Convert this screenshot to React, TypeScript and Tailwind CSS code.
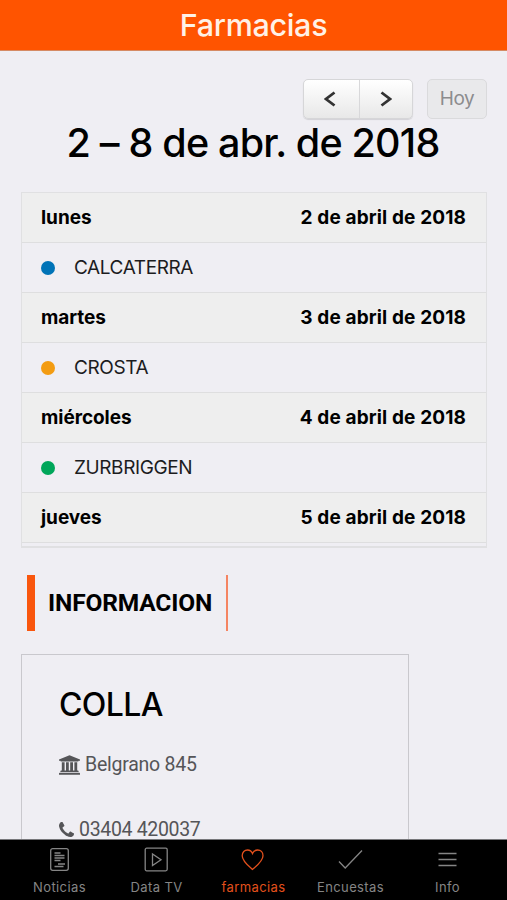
import React from 'react';

interface DayEntry {
    day: string;
    date: string;
    name?: string;
    dot?: string;
}

const days: DayEntry[] = [
    { day: 'lunes', date: '2 de abril de 2018', name: 'CALCATERRA', dot: 'bg-[#0073b7]' },
    { day: 'martes', date: '3 de abril de 2018', name: 'CROSTA', dot: 'bg-[#f39c12]' },
    { day: 'miércoles', date: '4 de abril de 2018', name: 'ZURBRIGGEN', dot: 'bg-[#00a65a]' },
    { day: 'jueves', date: '5 de abril de 2018' },
];

const BankIcon = () => (
    <svg viewBox="0 0 1920 1792" className="h-5 w-[21px] shrink-0" fill="currentColor">
        <path d="M960 0l960 384v128h-128q0 26-20.500 45t-48.500 19h-1526q-28 0-48.500-19t-20.500-45h-128v-128zM256 640h256v768h128v-768h256v768h128v-768h256v768h128v-768h256v768h59q28 0 48.500 19t20.500 45v64h-1664v-64q0-26 20.500-45t48.500-19h59v-768zM1851 1600q28 0 48.500 19t20.500 45v128h-1920v-128q0-26 20.500-45t48.500-19h1782z" />
    </svg>
);

const PhoneIcon = () => (
    <svg viewBox="192 128 1408 1408" className="mb-[2px] size-[15px] shrink-0" fill="currentColor">
        <path d="M1600 1240q0 27-10 70.500t-21 68.500q-21 50-122 106-94 51-186 51-27 0-52.500-3.500t-57.500-12.500-47.500-14.500-55.500-20.500-49-18q-98-35-175-83-128-79-264.500-215.500t-215.500-264.500q-48-77-83-175-3-9-18-49t-20.500-55.500-14.500-47.500-12.500-57.500-3.500-52.500q0-92 51-186 56-101 106-122 25-11 68.500-21t70.500-10q14 0 21 3 18 6 53 76 11 19 30 54t35 63.500 31 53.500q3 4 17.500 25t21.500 35.500 7 28.500q0 20-28.500 50t-62 55-62 53-28.500 46q0 9 5 22.500t8.500 20.500 14 24 11.500 19q76 137 174 235t235 174q2 1 19 11.500t24 14 20.500 8.500 22.500 5q18 0 46-28.500t53-62 55-62 50-28.500q14 0 28.500 7t35.500 21.500 25 17.500q25 15 53.500 31t63.500 35 54 30q70 35 76 53 3 7 3 21z" />
    </svg>
);

const tabs = [
    {
        label: 'Noticias',
        icon: (
            <>
                <rect x="4.700" y="2.700" width="17.600" height="21.600" rx="2" />
                <path d="M8.500 7h6M8.500 9.500h10M8.500 12h10M8.500 14.500h6M12 18h7M8.500 20.500h9" />
            </>
        ),
    },
    {
        label: 'Data TV',
        icon: (
            <>
                <rect x="2.200" y="2.200" width="22" height="22.600" rx="1.500" />
                <path d="M9.500 8v11.500l8.500-5.700z" />
            </>
        ),
    },
    {
        label: 'farmacias',
        active: true,
        icon: (
            <path d="M12.500 23.500C8 19.500 2.200 15 2.200 9.700C2.200 6.300 4.600 4 7.500 4C9.900 4 11.700 5.500 12.500 7.500C13.300 5.500 15.300 4 17.700 4C20.600 4 23 6.300 23 9.700C23 15 17 19.500 12.500 23.500Z" />
        ),
    },
    { label: 'Encuestas', icon: <path d="M2 15.500l6.200 6.500L25 4.500" /> },
    { label: 'Info', icon: <path d="M4.500 7.500h18M4.500 13.500h18M4.500 19.500h18" /> },
];

const Calendar: React.FC = () => (
    <section className="mr-5 ml-[21px] pt-7">
        {/* Toolbar */}
        <div className="flex h-10 justify-end gap-[14px]">
            <div className="flex w-[110px] overflow-hidden rounded-[5px] border border-[#d6d6d8] bg-linear-to-b from-white to-[#e8e8e8] shadow-[0_1px_1px_rgba(0,0,0,0.12)]">
                <button className="flex flex-1 items-center justify-center border-r border-[#d8d8da] pr-[2px]">
                    <svg viewBox="0 0 12 16" className="h-4 w-3" fill="none" stroke="#333" strokeWidth="2.800">
                        <path d="M10.500 1.500L2 8l8.500 6.500" />
                    </svg>
                </button>
                <button className="flex flex-1 items-center justify-center">
                    <svg viewBox="0 0 12 16" className="h-4 w-3" fill="none" stroke="#333" strokeWidth="2.800">
                        <path d="M1.500 1.500L10 8l-8.500 6.500" />
                    </svg>
                </button>
            </div>
            <button className="w-[60px] rounded-[5px] border border-[#dadadc] bg-[#e9e9eb] text-[19px] tracking-[-0.4px] text-[#8c8c8e]">
                Hoy
            </button>
        </div>
        <h2 className="-mt-[2px] pr-[2px] text-center text-[39.500px] leading-[52px] font-medium tracking-[-0.8px] whitespace-nowrap">
            2 – 8 de abr. de 2018
        </h2>

        {/* Week list */}
        <div className="mt-[23px] h-[356px] overflow-hidden border border-b-2 border-[#e0e0e2]">
            {days.map((d) => (
                <React.Fragment key={d.day}>
                    <div className="flex h-[50px] items-center justify-between border-b border-[#dededf] bg-[#eeeeee] px-[19px] pt-px text-[19px] font-bold">
                        <span className="tracking-[-0.05px]">{d.day}</span>
                        <span className="mr-px tracking-[0.13px]">{d.date}</span>
                    </div>
                    {d.name && (
                        <div className="flex h-[50px] items-center border-b border-[#dededf] pl-[19px] text-[19px] text-[#1c1c1e]">
                            <span className={`size-[14px] rounded-full ${d.dot}`} />
                            <span className="ml-[19px] pt-[2px] tracking-[-0.4px]">{d.name}</span>
                        </div>
                    )}
                </React.Fragment>
            ))}
        </div>
    </section>
);

export default function App() {
    return (
        <div className="flex h-[900px] w-[507px] flex-col overflow-hidden bg-[#efeef3] font-['Inter',sans-serif] text-black">
            <header className="flex h-[51px] shrink-0 items-center justify-center border-b border-[#d58a64] bg-[#ff5400] text-[30.500px] font-medium tracking-[-0.3px] text-[#fff1e6]">
                Farmacias
            </header>

            <main className="min-h-0 flex-1 overflow-hidden">
                <Calendar />

                <div className="mt-[27px] ml-[27px] flex h-14 w-[201px] items-center border-r-2 border-l-8 border-r-[#f58462] border-l-[#f9560d] pt-px pl-[13px] font-['Roboto',sans-serif] text-[24.500px] font-bold tracking-[-0.15px]">
                    INFORMACION
                </div>

                {/* Pharmacy details */}
                <div className="mt-[23px] ml-[21px] h-[240px] w-[388px] border border-[#c9c8cd] px-[37px] pt-[29px]">
                    <h3 className="text-[32px] leading-[42px] font-medium tracking-[-0.6px]">COLLA</h3>
                    <div className="mt-[27px] flex h-6 items-center gap-[5px] font-['Roboto',sans-serif] text-[19.500px] tracking-[-0.25px] text-[#555558]">
                        <BankIcon />
                        <span>Belgrano 845</span>
                    </div>
                    <div className="mt-[41px] flex h-6 items-center gap-[5px] font-['Roboto',sans-serif] text-[19.500px] tracking-[-0.33px] text-[#555558]">
                        <PhoneIcon />
                        <span>03404 420037</span>
                    </div>
                </div>
            </main>

            {/* Tab bar */}
            <nav className="flex h-[61px] shrink-0 border-t border-[#77777a] bg-black px-[11px]">
                {tabs.map((tab) => (
                    <div
                        key={tab.label}
                        className={`flex flex-1 flex-col items-center pt-[6px] ${tab.active ? 'text-[#e2501c]' : 'text-[#858585]'}`}
                    >
                        <svg viewBox="0 0 27 27" className="size-[27px]" fill="none" stroke="currentColor" strokeWidth="1.300">
                            {tab.icon}
                        </svg>
                        <span className="mt-[5px] text-[13px] leading-[18px] tracking-[0.4px]">{tab.label}</span>
                    </div>
                ))}
            </nav>
        </div>
    );
}
